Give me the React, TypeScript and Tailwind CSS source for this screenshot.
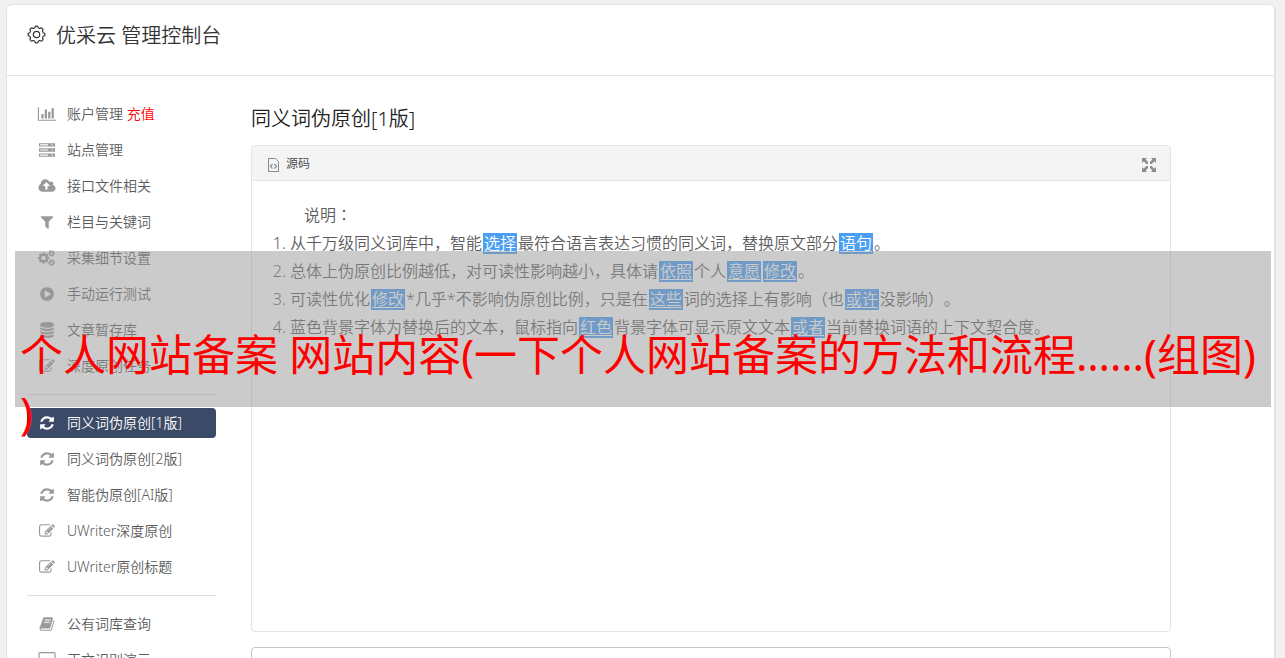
import type { ReactNode } from "react";

const refreshPath =
  "M1639 1056q0 5-1 7-64 268-268 434.5t-478 166.5q-146 0-282.5-55t-243.5-157l-129 129q-19 19-45 19t-45-19-19-45v-448q0-26 19-45t45-19h448q26 0 45 19t19 45-19 45l-137 137q71 66 161 102t187 36q134 0 250-65t186-179q11-17 53-117 8-23 30-23h192q13 0 22.5 9.5t9.5 22.5zm25-800v448q0 26-19 45t-45 19h-448q-26 0-45-19t-19-45 19-45l138-138q-148-137-349-137-134 0-250 65t-186 179q-11 17-53 117-8 23-30 23h-199q-13 0-22.5-9.5t-9.5-22.5v-7q65-268 270-434.5t480-166.5q146 0 284 55.5t245 156.5l130-129q19-19 45-19t45 19 19 45z";
const editPath =
  "M888 1184l116-116-152-152-116 116v56h96v96h56zm440-720q-16-16-33 1l-350 350q-17 17-1 33t33-1l350-350q17-17 1-33zm80 594v190q0 119-84.5 203.5t-203.5 84.5h-832q-119 0-203.5-84.5t-84.5-203.5v-832q0-119 84.5-203.5t203.5-84.5h832q63 0 117 25 15 7 18 23 3 17-9 29l-49 49q-14 14-32 8-23-6-45-6h-832q-66 0-113 47t-47 113v832q0 66 47 113t113 47h832q66 0 113-47t47-113v-126q0-13 9-22l64-64q15-15 35-7t20 29zm-96-738l288 288-672 672h-288v-288zm444 132l-92 92-288-288 92-92q28-28 68-28t68 28l152 152q28 28 28 68t-28 68z";
const smallCog =
  "v140q0 16-149 31-12 27-30 52 51 113 51 138 0 4-4 7-122 71-124 71-8 0-46-47t-52-68q-20 2-30 2t-30-2q-14 21-52 68t-46 47q-2 0-124-71-4-3-4-7 0-25 51-138-18-25-30-52-149-15-149-31v-140q0-16 149-31 13-29 30-52-51-113-51-138 0-4 4-7 4-2 35-20t59-34 30-16q8 0 46 46.5t52 67.5q20-2 30-2t30 2q51-71 92-112l6-2q4 0 124 70 4 3 4 7 0 25-51 138 17 23 30 52 149 15 149 31z";

const icons: Record<string, { w: number; d: string }> = {
  chart: {
    w: 2048,
    d: "M640 896v512h-256v-512h256zm384-512v1024h-256v-1024h256zm1024 1152v128h-2048v-1536h128v1408h1920zm-640-896v768h-256v-768h256zm384-384v1152h-256v-1152h256z",
  },
  server: {
    w: 1792,
    d: "M0 128h1792v384h-1792zM128 256v128h896v-128zM0 704h1792v384h-1792zM128 832v128h896v-128zM0 1280h1792v384h-1792zM128 1408v128h896v-128zM1408 256h128v128h-128zM1408 832h128v128h-128zM1408 1408h128v128h-128z",
  },
  upload: {
    w: 1920,
    d: "M1280 864q0-14-9-23l-352-352q-9-9-23-9t-23 9l-351 351q-10 12-10 24 0 14 9 23t23 9h224v352q0 13 9.5 22.5t22.5 9.5h192q13 0 22.5-9.5t9.5-22.5v-352h224q13 0 22.5-9.5t9.5-22.5zm640 288q0 159-112.5 271.5t-271.5 112.5h-1088q-185 0-316.5-131.5t-131.5-316.5q0-130 70-240t188-165q-2-30-2-43 0-212 150-362t362-150q156 0 285.5 87t188.5 231q71-62 166-62 106 0 181 75t75 181q0 76-41 138 130 31 213.5 135.5t83.5 238.5z",
  },
  filter: {
    w: 1792,
    d: "M1595 295q17 41-14 70l-493 493v742q0 42-39 59-13 5-25 5-27 0-45-19l-256-256q-19-19-19-45v-486l-493-493q-31-29-14-70 17-39 59-39h1280q42 0 59 39z",
  },
  cogs: {
    w: 1920,
    d:
      "M832 896q0-106-75-181t-181-75-181 75-75 181 75 181 181 75 181-75 75-181zm768 512q0-52-38-90t-90-38-90 38-38 90q0 53 37.5 90.5t90.5 37.5 90.5-37.5 37.5-90.5zm0-1024q0-52-38-90t-90-38-90 38-38 90q0 53 37.5 90.5t90.5 37.5 90.5-37.5 37.5-90.5zm-384 421v185q0 10-7 19.5t-16 10.5l-155 24q-11 35-32 76 34 48 90 115 7 11 7 20 0 12-7 19-23 30-82.5 89.5t-78.5 59.5q-11 0-21-7l-115-90q-37 19-77 31-11 108-23 155-7 24-30 24h-186q-11 0-20-7.5t-10-17.5l-23-153q-34-10-75-31l-118 89q-7 7-20 7-11 0-21-8-144-133-144-160 0-9 7-19 10-14 41-53t47-61q-23-44-35-82l-152-24q-10-1-17-9.5t-7-19.5v-185q0-10 7-19.5t16-10.5l155-24q11-35 32-76-34-48-90-115-7-11-7-20 0-12 7-20 22-30 82-89t79-59q11 0 21 7l115 90q34-18 77-32 11-108 23-154 7-24 30-24h186q11 0 20 7.5t10 17.5l23 153q34 10 75 31l118-89q8-7 20-7 11 0 21 8 144 133 144 160 0 8-7 19-12 16-42 54t-45 60q23 48 34 82l152 23q10 2 17 10.5t7 19.5zm640 533" +
      smallCog +
      "m0-1024" +
      smallCog,
  },
  play: {
    w: 1792,
    d: "M896 128q209 0 385.5 103t279.5 279.5 103 385.5-103 385.5-279.5 279.5-385.5 103-385.5-103-279.5-279.5-103-385.5 103-385.5 279.5-279.5 385.5-103zm384 823q32-18 32-55t-32-55l-544-320q-31-19-64-1-32 19-32 56v640q0 37 32 56 16 8 32 8 17 0 32-9z",
  },
  database: {
    w: 1792,
    d: "M896 768q237 0 443-43t325-127v170q0 69-103 128t-280 93.5-385 34.5-385-34.5-280-93.5-103-128v-170q119 84 325 127t443 43zm0 768q237 0 443-43t325-127v170q0 69-103 128t-280 93.5-385 34.5-385-34.5-280-93.5-103-128v-170q119 84 325 127t443 43zm0-384q237 0 443-43t325-127v170q0 69-103 128t-280 93.5-385 34.5-385-34.5-280-93.5-103-128v-170q119 84 325 127t443 43zm0-1152q208 0 385 34.5t280 93.5 103 128v128q0 69-103 128t-280 93.5-385 34.5-385-34.5-280-93.5-103-128v-128q0-69 103-128t280-93.5 385-34.5z",
  },
  edit: { w: 1792, d: editPath },
  refresh: { w: 1792, d: refreshPath },
  book: {
    w: 1792,
    d: "M1703 478q40 57 18 129l-275 906q-19 64-76.5 107.5t-122.5 43.5h-923q-77 0-148.5-53.5t-99.5-131.5q-24-67-2-127 0-4 3-27t4-37q1-8-3-21.5t-3-19.5q2-11 8-21t16.5-23.5 16.5-23.5q23-38 45-91.5t30-91.5q3-10 .5-30t-.5-28q3-11 17-28t17-23q21-36 42-92t25-90q1-9-2.5-32t.5-28q4-13 22-30.5t22-22.5q19-26 42.5-84.5t27.5-96.5q1-8-3-25.5t-2-26.5q2-8 9-18t18-23 17-21q8-12 16.5-30.5t15-35 16-36 19.5-32 26.5-23.5 36-11.5 47.5 5.5l-1 3q38-9 51-9h761q74 0 114 56t18 130l-274 906q-36 119-71.5 153.5t-128.5 34.5h-869q-27 0-38 15-11 16-1 43 24 70 144 70h923q29 0 56-15.5t35-41.5l300-987q7-22 5-57 38 15 59 43zm-1064 2q-4 13 2 22.5t20 9.5h608q13 0 25.5-9.5t16.5-22.5l21-64q4-13-2-22.5t-20-9.5h-608q-13 0-25.5 9.5t-16.5 22.5zm-83 256q-4 13 2 22.5t20 9.5h608q13 0 25.5-9.5t16.5-22.5l21-64q4-13-2-22.5t-20-9.5h-608q-13 0-25.5 9.5t-16.5 22.5z",
  },
  desktop: {
    w: 1920,
    d: "M1792 992v-832q0-13-9.5-22.5t-22.5-9.5h-1600q-13 0-22.5 9.5t-9.5 22.5v832q0 13 9.5 22.5t22.5 9.5h1600q13 0 22.5-9.5t9.5-22.5zm128-832v1088q0 66-47 113t-113 47h-544q0 37 16 77.5t32 71 16 43.5q0 26-19 45t-45 19h-512q-26 0-45-19t-19-45q0-14 16-44t32-70 16-78h-544q-66 0-113-47t-47-113v-1088q0-66 47-113t113-47h1600q66 0 113 47t47 113z",
  },
};

function Icon({ name }: { name: string }) {
  const { w, d } = icons[name];
  return (
    <svg aria-hidden="true" viewBox={`0 0 ${w} 1792`} className="h-4 w-5 shrink-0" fill="currentColor" fillRule="evenodd">
      <path d={d} />
    </svg>
  );
}

/* Outline gear with eight rounded lobes */
const gearOutline = (() => {
  const points: string[] = [];
  for (let i = 0; i <= 96; i++) {
    const t = (i / 96) * Math.PI * 2;
    const r = 7.6 + 0.8 * Math.tanh(2 * Math.cos(8 * t));
    points.push(`${(9.5 + r * Math.cos(t)).toFixed(2)} ${(9.5 + r * Math.sin(t)).toFixed(2)}`);
  }
  return `M${points.join("L")}Z`;
})();

type Item = { icon: string; label: string; extra?: string; active?: boolean };

const groups: Item[][] = [
  [
    { icon: "chart", label: "账户管理", extra: "充值" },
    { icon: "server", label: "站点管理" },
    { icon: "upload", label: "接口文件相关" },
    { icon: "filter", label: "栏目与关键词" },
    { icon: "cogs", label: "采集细节设置" },
    { icon: "play", label: "手动运行测试" },
    { icon: "database", label: "文章暂存库" },
    { icon: "edit", label: "深度原创任务" },
  ],
  [
    { icon: "refresh", label: "同义词伪原创[1版]", active: true },
    { icon: "refresh", label: "同义词伪原创[2版]" },
    { icon: "refresh", label: "智能伪原创[AI版]" },
    { icon: "edit", label: "UWriter深度原创" },
    { icon: "edit", label: "UWriter原创标题" },
  ],
  [
    { icon: "book", label: "公有词库查询" },
    { icon: "desktop", label: "正文识别演示" },
  ],
];

function NavItem({ item }: { item: Item }) {
  return (
    <li>
      <a
        href="#"
        className={`flex h-[30px] items-center gap-2.5 rounded pl-2.5 text-sm ${
          item.active ? "bg-[#3b4a66] text-white" : "text-[#5c5c5c]"
        }`}
      >
        <span className={item.active ? "text-white" : "text-[#999]"}>
          <Icon name={item.icon} />
        </span>
        <span>
          {item.label}
          {item.extra && <span className="text-[#f00]"> {item.extra}</span>}
        </span>
      </a>
    </li>
  );
}

function Mark({ children }: { children: ReactNode }) {
  return (
    <mark className="mx-px inline-block h-[21px] bg-[#4a9ff5] px-px leading-[21px] text-white underline underline-offset-2">
      {children}
    </mark>
  );
}

export default function App() {
  return (
    <div
      lang="zh-CN"
      className="relative h-screen overflow-hidden bg-[#f1f1f1] pt-1 pr-[9px] pl-1.5 font-['Noto_Sans','Noto_Sans_CJK_SC',sans-serif] font-[350] text-[#5c5c5c] [text-spacing-trim:space-all]"
    >
      <div className="min-h-full rounded-t-md border border-r-2 border-[#e4e4e4] bg-white">
        <header className="flex h-[71px] items-start gap-2.5 border-b border-[#e4e4e4] pt-4 pl-5 text-[#333]">
          <svg aria-hidden="true" viewBox="0 0 19 19" className="mt-1 size-[19px]" fill="none" stroke="currentColor" strokeWidth="1.2">
            <path d={gearOutline} />
            <circle cx="9.5" cy="9.5" r="3.2" />
          </svg>
          <h1 className="text-xl leading-[30px]">优采云 管理控制台</h1>
        </header>

        <div className="flex items-start">
          <nav className="ml-5 w-[189px] shrink-0 pt-[23px]">
            {groups.map((group, i) => (
              <ul
                key={group[0].label}
                className={`flex flex-col gap-1.5 ${i > 0 ? "mt-[13px] border-t border-[#ddd] pt-[13px]" : ""}`}
              >
                {group.map((item) => (
                  <NavItem key={item.label} item={item} />
                ))}
              </ul>
            ))}
          </nav>

          <main className="ml-[35px] min-w-0 flex-1 pt-7 pr-[103px]">
            <h2 className="text-xl leading-[30px] text-[#222]">同义词伪原创[1版]</h2>
            <section className="mt-[11px] min-h-[487px] rounded border border-[#e4e4e4]">
              <div className="flex h-[35px] items-center justify-between rounded-t border-b border-[#e4e4e4] bg-[#f4f4f4] pr-3.5 pl-4 text-xs">
                <button type="button" className="flex items-center gap-[7px] pt-0.5 text-[#444]">
                  <svg aria-hidden="true" viewBox="0 0 11 14" className="mt-0.5 h-3.5 w-[11px]" fill="none" stroke="#888">
                    <path d="M.5.5h7l3 3v10H.5z" />
                    <path d="M4.5 6 2.5 8.3l2 2.2M6.5 6l2 2.3-2 2.2" strokeWidth="1.2" />
                  </svg>
                  源码
                </button>
                <button type="button" aria-label="全屏">
                  <svg aria-hidden="true" viewBox="0 0 14 14" className="mt-1 size-3.5" fill="#8b8b8b">
                    <path d="M0 0h5L3.6 1.5 6 3.9V6H4.4L1.7 3.3 0 5zM14 0H9l1.4 1.5L8 3.9V6h1.6l2.7-2.7L14 5zM0 14h5l-1.4-1.5L6 10.1V8H4.4l-2.7 2.7L0 9zM14 14H9l1.4-1.5L8 10.1V8h1.6l2.7 2.7L14 9z" />
                  </svg>
                </button>
              </div>
              <div className="px-5 pt-[19px] text-base leading-7">
                <p className="indent-8">
                  说明<span lang="ja" className="font-['Noto_Sans_CJK_JP',sans-serif]">：</span>
                </p>
                <ol className="list-decimal pl-[18px] whitespace-nowrap">
                  <li>
                    从千万级同义词库中，智能<Mark>选择</Mark>最符合语言表达习惯的同义词，替换原文部分<Mark>语句</Mark>。
                  </li>
                  <li>
                    总体上伪原创比例越低，对可读性影响越小，具体请<Mark>依照</Mark>个人<Mark>意愿</Mark><Mark>修改</Mark>。
                  </li>
                  <li>
                    可读性优化<Mark>修改</Mark>*几乎*不影响伪原创比例，只是在<Mark>这些</Mark>词的选择上有影响（也<Mark>或许</Mark>没影响）。
                  </li>
                  <li>
                    蓝色背景字体为替换后的文本，鼠标指向<Mark>红色</Mark>背景字体可显示原文文本<Mark>或者</Mark>当前替换词语的上下文契合度。
                  </li>
                </ol>
              </div>
            </section>
            <section className="mt-[15px] h-20 rounded border border-[#c4c4c4]" />
          </main>
        </div>
      </div>

      <div className="absolute top-[251px] right-[14px] left-[15px] h-[156px] bg-[#979797]/50 px-[5px] pt-[75px] text-[43px] leading-[58px] font-normal whitespace-nowrap text-[#f00]">
        个人网站备案 网站内容(一下个人网站备案的方法和流程……(组图)
        <br />)
      </div>
    </div>
  );
}
